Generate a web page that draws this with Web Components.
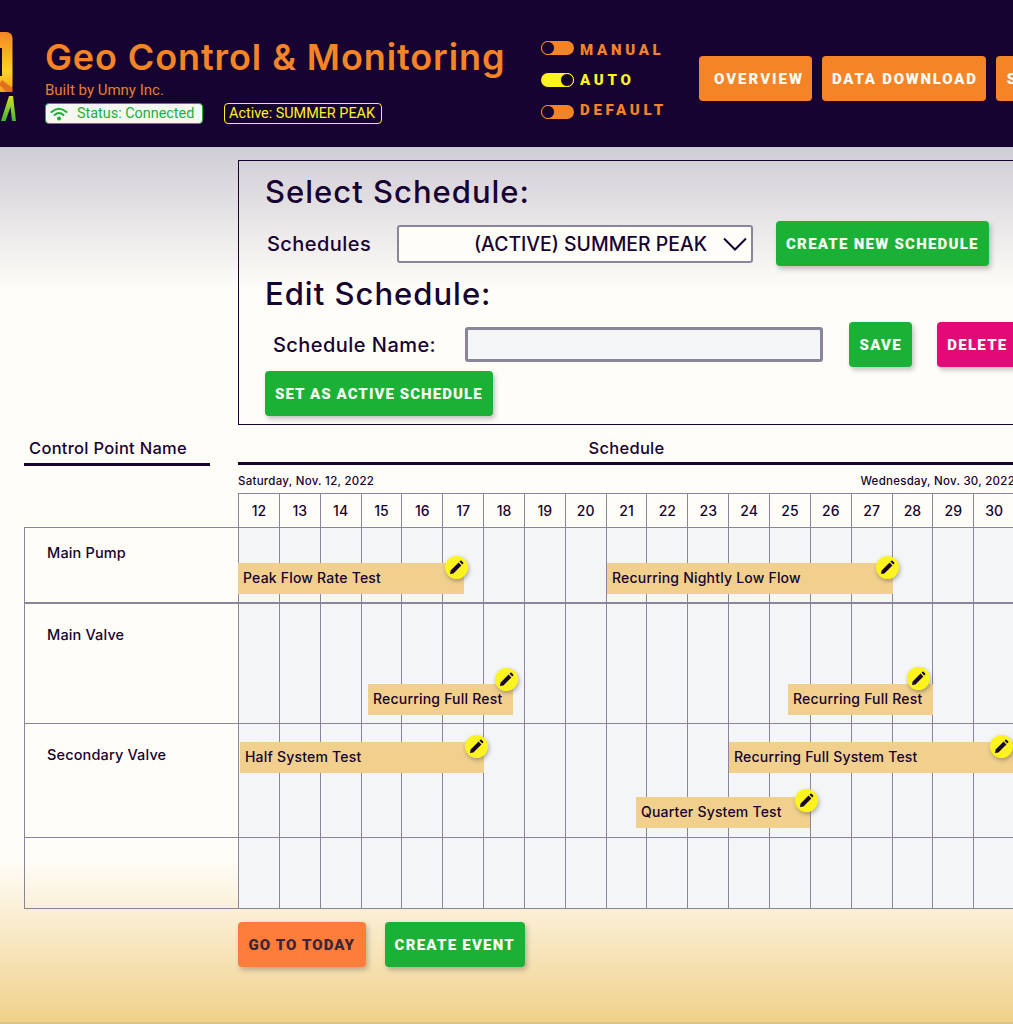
<!DOCTYPE html>
<html>
<head>
<meta charset="utf-8">
<title>Geo Control & Monitoring</title>
<style>
  html, body { margin: 0; padding: 0; height: 1024px; overflow: hidden; }
  body {
    width: 1013px;
    font-family: "Inter", "Liberation Sans", sans-serif;
    color: #170331;
    background: linear-gradient(180deg, #d0ccd5 0, #d0ccd5 147px, #fffdf8 290px, #fffdf8 860px, #f0d18a 1022px, #d8c489 1022px, #d8c489 1024px);
  }
</style>
</head>
<body>
<app-header></app-header>
<schedule-panel></schedule-panel>
<gantt-chart></gantt-chart>

<script>
const BTN_FONT = '"Roboto", "Liberation Sans", sans-serif';

// small rounded action button
class ActionButton extends HTMLElement {
    constructor() {
        super();
        this.attachShadow({ mode: 'open' });
        const color = this.getAttribute('color') || '#1bb136';
        const ink = this.getAttribute('ink') || '#f7fbf4';
        const shadow = this.hasAttribute('flat') ? 'none' : '2px 3px 5px rgba(60,50,60,.3)';
        this.shadowRoot.innerHTML = `
            <style>
                :host { display: inline-block; flex: none; }
                div {
                    display: flex; align-items: center; justify-content: center;
                    height: 45px; box-sizing: border-box;
                    padding: var(--pad, 0 10px);
                    background: ${color}; color: ${ink};
                    border-radius: 4px;
                    box-shadow: ${shadow};
                    font: 900 15px ${BTN_FONT};
                    letter-spacing: var(--ls, 1.25px);
                    white-space: nowrap;
                }
            </style>
            <div><slot></slot></div>`;
    }
}
customElements.define('action-button', ActionButton);

// mode switch in the header
class ModeToggle extends HTMLElement {
    constructor() {
        super();
        this.attachShadow({ mode: 'open' });
        const on = this.hasAttribute('on');
        const shift = this.getAttribute('shift') || 0;
        this.shadowRoot.innerHTML = `
            <style>
                :host { display: flex; align-items: center; gap: 6px; height: 30px;
                    color: ${on ? '#fdf41f' : '#f58427'}; }
                .track { position: relative; width: 33px; height: 14px; border-radius: 7px;
                    background: currentColor; margin-top: ${shift}px; flex: none; }
                .knob { position: absolute; top: 0; ${on ? 'right: 0' : 'left: 0'};
                    width: 12px; height: 12px; border-radius: 50%;
                    background: #170331; border: 1px solid currentColor; }
                span { font: 900 15px ${BTN_FONT}; letter-spacing: 3.7px; }
            </style>
            <div class="track"><div class="knob"></div></div>
            <span><slot></slot></span>`;
    }
}
customElements.define('mode-toggle', ModeToggle);

const headerTpl = document.createElement('template');
headerTpl.innerHTML = `
    <style>
        :host { display: flex; align-items: flex-start; height: 147px; background: #170331;
            width: 1200px; font-family: "Inter", sans-serif; }
        .logo { margin: 30px 0 0 -30px; width: 46px; height: 95px; flex: none; }
        .title-block { margin: 35px 0 0 29px; width: 496px; flex: none; }
        h1 { margin: 0; font: 600 36px/44px "Inter", sans-serif; color: #f58427; letter-spacing: .9px; white-space: nowrap; }
        .built { font: 400 15px/16px ${BTN_FONT}; color: #e67f2c; margin-top: 3px; }
        .pills { display: flex; gap: 21px; margin-top: 5px; }
        .pill { display: flex; align-items: center; height: 21px; box-sizing: border-box;
            border-radius: 4px; font: 400 14.4px ${BTN_FONT}; white-space: nowrap; }
        .status { width: 158px; background: #f5f7f2; border: 1px solid #1bb136; color: #1bb136; padding-left: 4px; gap: 9px; }
        .active { width: 158px; border: 1px solid #fdf41f; color: #fdf41f; padding-left: 4px; }
        .modes { margin: 35px 0 0 0; width: 158px; flex: none; }
        .nav { display: flex; gap: 10px; margin-top: 56px; --ls: 2px; }
    </style>
    <svg class="logo" viewBox="0 0 46 95">
        <defs><linearGradient id="lg" x1="0" y1="0" x2="0" y2="1">
            <stop offset="0" stop-color="#f58427"/><stop offset=".65" stop-color="#fdd320"/><stop offset="1" stop-color="#f6a023"/></linearGradient>
            <linearGradient id="lm" x1="0" y1="0" x2="0" y2="1">
            <stop offset="0" stop-color="#d6e21f"/><stop offset="1" stop-color="#3db636"/></linearGradient></defs>
        <rect x="0" y="2" width="42.5" height="60" rx="6" fill="url(#lg)"/>
        <rect x="11" y="18" width="21" height="28" fill="#170331"/>
        <path d="M36 62 L29 54 L32 50 L42.5 58 V62 Z" fill="#e0701f"/>
        <path d="M31 91 L39 66 H43 L46 91 H42 L40.5 77 L35.5 91 Z" fill="url(#lm)"/>
    </svg>
    <div class="title-block">
        <h1>Geo Control &amp; Monitoring</h1>
        <div class="built">Built by Umny Inc.</div>
        <div class="pills">
            <div class="pill status">
                <svg width="18" height="14" viewBox="0 0 18 14" fill="none" stroke="#1bb136" stroke-width="2" stroke-linecap="round">
                    <path d="M1.5 5 Q9 -1.5 16.5 5"/><path d="M4.5 8 Q9 4 13.5 8"/><circle cx="9" cy="11.5" r="1" fill="#1bb136"/>
                </svg>
                Status: Connected
            </div>
            <div class="pill active">Active: SUMMER PEAK</div>
        </div>
    </div>
    <div class="modes">
        <mode-toggle shift="-4">MANUAL</mode-toggle>
        <mode-toggle on>AUTO</mode-toggle>
        <mode-toggle shift="4">DEFAULT</mode-toggle>
    </div>
    <div class="nav">
        <action-button color="#f58427" flat style="--pad:0 8px 0 15px">OVERVIEW</action-button>
        <action-button color="#f58427" flat style="--ls:1.75px;--pad:0 8px 0 10px">DATA DOWNLOAD</action-button>
        <action-button color="#f58427" flat style="--pad:0 11px">SETTINGS</action-button>
    </div>`;

class AppHeader extends HTMLElement {
    constructor() {
        super();
        this.attachShadow({ mode: 'open' });
        this.shadowRoot.appendChild(headerTpl.content.cloneNode(true));
    }
}
customElements.define('app-header', AppHeader);

const panelTpl = document.createElement('template');
panelTpl.innerHTML = `
    <style>
        :host { display: block; box-sizing: border-box; width: 800px; height: 265px;
            margin: 13px 0 0 238px; border: 1px solid #170331; padding: 11px 0 0 26px; font-family: "Inter", sans-serif; }
        h2 { margin: 0; font: 500 31px/40px "Inter", sans-serif; color: #170331; letter-spacing: 1px; white-space: nowrap; }
        .row { display: flex; align-items: center; }
        .row-1 { height: 45px; margin-top: 9px; }
        .row-2 { height: 45px; margin-top: 8px; }
        label { font: 500 20px "Inter", sans-serif; letter-spacing: .45px; white-space: nowrap; }
        .select { display: flex; align-items: center; justify-content: flex-end; box-sizing: border-box;
            width: 356px; height: 38px; margin-left: 26px; background: #fffdf8;
            border: 2px solid #8a8598; border-radius: 3px; padding-right: 4px; gap: 16px;
            font: 500 19.4px "Inter", sans-serif; white-space: nowrap; }
        .input { box-sizing: border-box; width: 358px; height: 35px; margin-left: 28px;
            background: #f4f5f7; border: 3px solid #8a8598; border-radius: 3px; }
    </style>
    <h2>Select Schedule:</h2>
    <div class="row row-1">
        <label style="margin-left:2px;width:104px">Schedules</label>
        <div class="select">(ACTIVE) SUMMER PEAK
            <svg width="24" height="14" viewBox="0 0 24 14" fill="none" stroke="#170331" stroke-width="2"><path d="M1 1.5 L12 12.5 L23 1.5"/></svg>
        </div>
        <action-button style="margin-left:23px">CREATE NEW SCHEDULE</action-button>
    </div>
    <h2 style="margin-top:8px">Edit Schedule:</h2>
    <div class="row row-2">
        <label style="margin-left:8px;width:164px">Schedule Name:</label>
        <div class="input"></div>
        <action-button style="margin-left:26px;--pad:0 10.5px">SAVE</action-button>
        <action-button color="#e30a77" style="margin-left:25px">DELETE</action-button>
    </div>
    <div class="row" style="margin-top:4px">
        <action-button style="--ls:1.07px">SET AS ACTIVE SCHEDULE</action-button>
    </div>`;

class SchedulePanel extends HTMLElement {
    constructor() {
        super();
        this.attachShadow({ mode: 'open' });
        this.shadowRoot.appendChild(panelTpl.content.cloneNode(true));
    }
}
customElements.define('schedule-panel', SchedulePanel);

// one bar on the chart, sits over the day cells
class EventBar extends HTMLElement {
    constructor() {
        super();
        this.attachShadow({ mode: 'open' });
        const a = n => this.getAttribute(n);
        this.shadowRoot.innerHTML = `
            <style>
                :host { position: absolute; left: ${a('x')}px; top: ${a('y')}px; width: ${a('w')}px; height: 31px;
                    display: flex; align-items: center; box-sizing: border-box; padding: 0 0 2px 5px;
                    background: #f1d08e; color: #170331; font: 500 14px "Inter", sans-serif; letter-spacing: .2px; white-space: nowrap; }
                .pen { position: absolute; right: ${-11.5 - Number(a('dx'))}px; top: ${Number(a('dy')) - 11.5}px; width: 23px; height: 23px; border-radius: 50%;
                    background: #fdf41f; box-shadow: 1px 2px 4px rgba(60,50,60,.4);
                    display: flex; align-items: center; justify-content: center; }
            </style>
            <slot></slot>
            <div class="pen">
                <svg width="15" height="15" viewBox="0 0 15 15"><path fill="#170331" d="M1 14 L1.6 10.6 L9.6 2.6 L12.4 5.4 L4.4 13.4 Z M10.5 1.7 L11.4 .8 Q12 .3 12.6 .8 L14.2 2.4 Q14.7 3 14.2 3.6 L13.3 4.5 Z"/></svg>
            </div>`;
    }
}
customElements.define('event-bar', EventBar);

// chart row: name on the left, 19 day cells on the right, bars go in the slot
class ChartRow extends HTMLElement {
    constructor() {
        super();
        this.attachShadow({ mode: 'open' });
        const h = this.getAttribute('h');
        let cells = '';
        for (let i = 0; i < 19; i++) cells += '<i></i>';
        this.shadowRoot.innerHTML = `
            <style>
                :host { display: flex; height: ${h}px; box-sizing: border-box; position: relative;
                    border-bottom: ${this.getAttribute('line') || 1}px solid #8a8598; }
                .name { box-sizing: border-box; width: 214px; flex: none; border-left: 1px solid #8a8598;
                    padding: ${this.getAttribute('top') || 17}px 0 0 22px; font: 500 14.5px "Inter", sans-serif; letter-spacing: .15px; }
                .days { position: relative; display: grid; grid-template-columns: repeat(19, 40.85px); background: #f4f5f7; }
                i { border-left: 1px solid #8a8598; }
            </style>
            <div class="name">${this.getAttribute('name') || ''}</div>
            <div class="days">${cells}<slot></slot></div>`;
    }
}
customElements.define('chart-row', ChartRow);

const ganttTpl = document.createElement('template');
ganttTpl.innerHTML = `
    <style>
        :host { display: block; width: 1100px; margin: 12px 0 0 24px; font-family: "Inter", sans-serif; }
        .heads { display: flex; height: 29px; }
        .head-l { box-sizing: border-box; width: 186px; border-bottom: 3px solid #170331; padding: 1px 0 0 5px;
            font: 500 16.5px "Inter", sans-serif; letter-spacing: .28px; height: 29px; white-space: nowrap; }
        .head-r { box-sizing: border-box; width: 777px; margin-left: 28px; border-bottom: 3px solid #170331;
            padding-top: 1px; text-align: center; font: 500 16.5px "Inter", sans-serif; letter-spacing: .28px; height: 28px; }
        .range { display: flex; justify-content: space-between; width: 777px; margin-left: 214px;
            font: 500 11.5px/16px "Inter", sans-serif; letter-spacing: .27px; height: 27px; padding-top: 2px; box-sizing: border-box; align-items: center; white-space: nowrap; }
        .labels { display: grid; grid-template-columns: repeat(19, 40.85px); margin-left: 214px; height: 34px; width: 776.2px;
            font: 500 14px "Inter", sans-serif; border-top: 1px solid #8a8598; box-sizing: border-box; }
        .labels span { display: flex; align-items: center; justify-content: center; border-left: 1px solid #8a8598; }
        .body { border-top: 1px solid #8a8598; }
        .actions { display: flex; gap: 19px; margin: 13px 0 0 214px; }
    </style>
    <div class="heads">
        <div class="head-l">Control Point Name</div>
        <div class="head-r">Schedule</div>
    </div>
    <div class="range"><span>Saturday, Nov. 12, 2022</span><span>Wednesday, Nov. 30, 2022</span></div>
    <div class="labels"></div>
    <div class="body">
        <chart-row name="Main Pump" h="76" line="2" top="16">
            <event-bar x="0" y="35" w="226" dx="-8" dy="4">Peak Flow Rate Test</event-bar>
            <event-bar x="369" y="35" w="286" dx="-6" dy="4">Recurring Nightly Low Flow</event-bar>
        </chart-row>
        <chart-row name="Main Valve" h="120" top="22">
            <event-bar x="130" y="80" w="145" dx="-7" dy="-5">Recurring Full Rest</event-bar>
            <event-bar x="550" y="80" w="145" dx="-15" dy="-6">Recurring Full Rest</event-bar>
        </chart-row>
        <chart-row name="Secondary Valve" h="114" top="22">
            <event-bar x="2" y="18" w="244" dx="-8" dy="4">Half System Test</event-bar>
            <event-bar x="491" y="18" w="284" dx="-12" dy="4">Recurring Full System Test</event-bar>
            <event-bar x="398" y="73" w="174" dx="-4" dy="3">Quarter System Test</event-bar>
        </chart-row>
        <chart-row h="71"></chart-row>
    </div>
    <div class="actions">
        <action-button color="#fe7d3b" ink="#3d2535" style="--ls:1.1px;--pad:0 10.5px">GO TO TODAY</action-button>
        <action-button>CREATE EVENT</action-button>
    </div>`;

class GanttChart extends HTMLElement {
    constructor() {
        super();
        this.attachShadow({ mode: 'open' });
        this.shadowRoot.appendChild(ganttTpl.content.cloneNode(true));
        const labels = this.shadowRoot.querySelector('.labels');
        for (let d = 12; d <= 30; d++) {
            const s = document.createElement('span');
            s.textContent = d;
            labels.append(s);
        }
    }
}
customElements.define('gantt-chart', GanttChart);
</script>
</body>
</html>
